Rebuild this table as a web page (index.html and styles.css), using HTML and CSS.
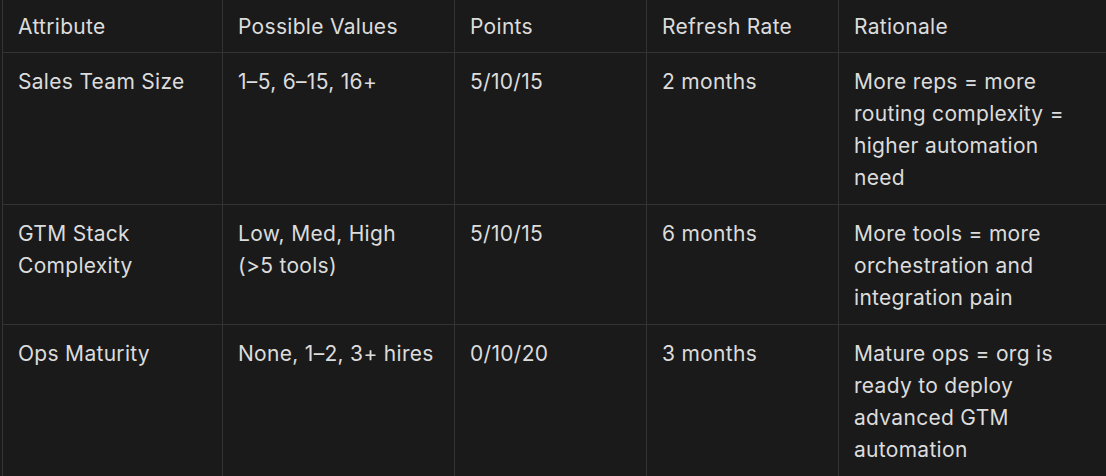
FILE: index.html
```html
<!DOCTYPE html>
<html lang="en">
<head>
<meta charset="utf-8">
<title>Scoring attributes</title>
<link rel="stylesheet" href="styles.css">
</head>
<body>
<div class="wrap">
<table class="grid">
<colgroup>
<col class="c1"><col class="c2"><col class="c3"><col class="c4"><col class="c5">
</colgroup>
<thead>
<tr><th>Attribute</th><th>Possible Values</th><th>Points</th><th>Refresh Rate</th><th>Rationale</th></tr>
</thead>
<tbody>
<tr><td>Sales Team Size</td><td>1–5, 6–15, 16+</td><td>5/10/15</td><td>2 months</td><td>More reps = more routing complexity = higher automation need</td></tr>
<tr><td>GTM Stack Complexity</td><td>Low, Med, High <span class="nw">(&gt;5 tools)</span></td><td>5/10/15</td><td>6 months</td><td>More tools = more orchestration and integration pain</td></tr>
<tr><td>Ops Maturity</td><td>None, 1–2, 3+ hires</td><td>0/10/20</td><td>3 months</td><td>Mature ops = org is ready to deploy advanced GTM automation</td></tr>
</tbody>
</table>
</div>
</body>
</html>
```

FILE: styles.css
```css
html, body {
  margin: 0;
  padding: 0;
  background: #1a1a1a;
}
.wrap {
  padding-left: 2px;
  overflow: hidden;
}
.grid {
  border-collapse: collapse;
  table-layout: fixed;
  width: 1104px;
  font-family: Inter, "Noto Sans", sans-serif;
  font-size: 21px;
  letter-spacing: 0.3px;
  line-height: 32px;
  color: #dcdcdc;
}
.c1 { width: 220px; }
.c2 { width: 232px; }
.c3 { width: 192px; }
.c4 { width: 192px; }
.c5 { width: 268px; }
.grid th, .grid td {
  text-align: left;
  vertical-align: top;
  font-weight: 400;
  padding: 13px 15px 10px;
  border: 1px solid #333333;
}
.grid th {
  border-top: none;
  padding-top: 11px;
  padding-bottom: 9px;
}
.nw {
  white-space: nowrap;
}
```
